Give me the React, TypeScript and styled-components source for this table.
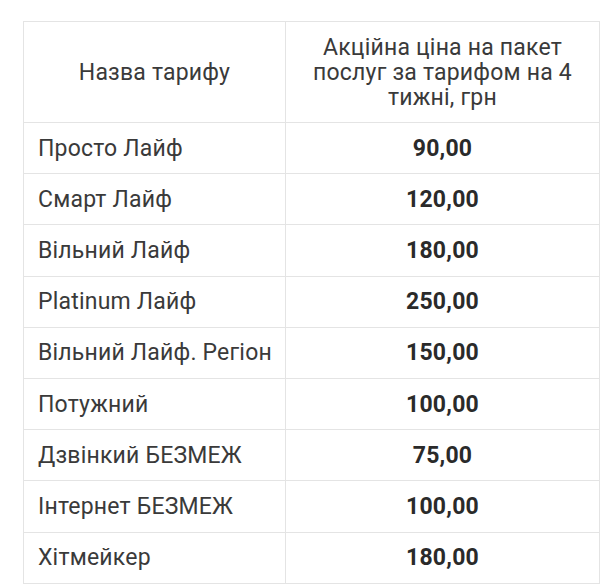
import React from "react";
import styled, { createGlobalStyle } from "styled-components";

const Global = createGlobalStyle`
  html, body { margin: 0; padding: 0; background: #ffffff; }
  body { font-family: Roboto, "Noto Sans", "Liberation Sans", sans-serif; }
`;

const Page = styled.div`
  padding: 21px 1px 0 23px;
  width: 600px;
  box-sizing: border-box;
`;

const Table = styled.table`
  border-collapse: collapse;
  width: 576px;
  table-layout: fixed;
  font-family: Roboto, "Noto Sans", sans-serif;
  font-size: 23px;
  letter-spacing: 0.2px;
  color: #3a3a3a;
`;

const HeadCell = styled.th<{ $w: number }>`
  width: ${(p) => p.$w}px;
  height: 101px;
  box-sizing: border-box;
  border: 1px solid #e4e4e4;
  padding: 0 12px;
  font-weight: 400;
  text-align: center;
  vertical-align: middle;
  line-height: 25px;
`;

const Cell = styled.td<{ $price?: boolean }>`
  height: 51.2px;
  box-sizing: border-box;
  border: 1px solid #e4e4e4;
  padding: ${(p) => (p.$price ? "0 14px" : "0 4px 0 14px")};
  white-space: nowrap;
  vertical-align: middle;
  line-height: 25px;
  text-align: ${(p) => (p.$price ? "center" : "left")};
  font-weight: ${(p) => (p.$price ? 700 : 400)};
  color: ${(p) => (p.$price ? "#2a2a2a" : "#3a3a3a")};
`;

const rows: [string, string][] = [
  ["Просто Лайф", "90,00"],
  ["Смарт Лайф", "120,00"],
  ["Вільний Лайф", "180,00"],
  ["Platinum Лайф", "250,00"],
  ["Вільний Лайф. Регіон", "150,00"],
  ["Потужний", "100,00"],
  ["Дзвінкий БЕЗМЕЖ", "75,00"],
  ["Інтернет БЕЗМЕЖ", "100,00"],
  ["Хітмейкер", "180,00"],
];

export default function App() {
  return (
    <>
      <Global />
      <Page>
        <Table>
          <thead>
            <tr>
              <HeadCell $w={262}>Назва тарифу</HeadCell>
              <HeadCell $w={314}>
                Акційна ціна на пакет послуг за тарифом на 4 тижні, грн
              </HeadCell>
            </tr>
          </thead>
          <tbody>
            {rows.map(([name, price]) => (
              <tr key={name}>
                <Cell>{name}</Cell>
                <Cell $price>{price}</Cell>
              </tr>
            ))}
          </tbody>
        </Table>
      </Page>
    </>
  );
}
